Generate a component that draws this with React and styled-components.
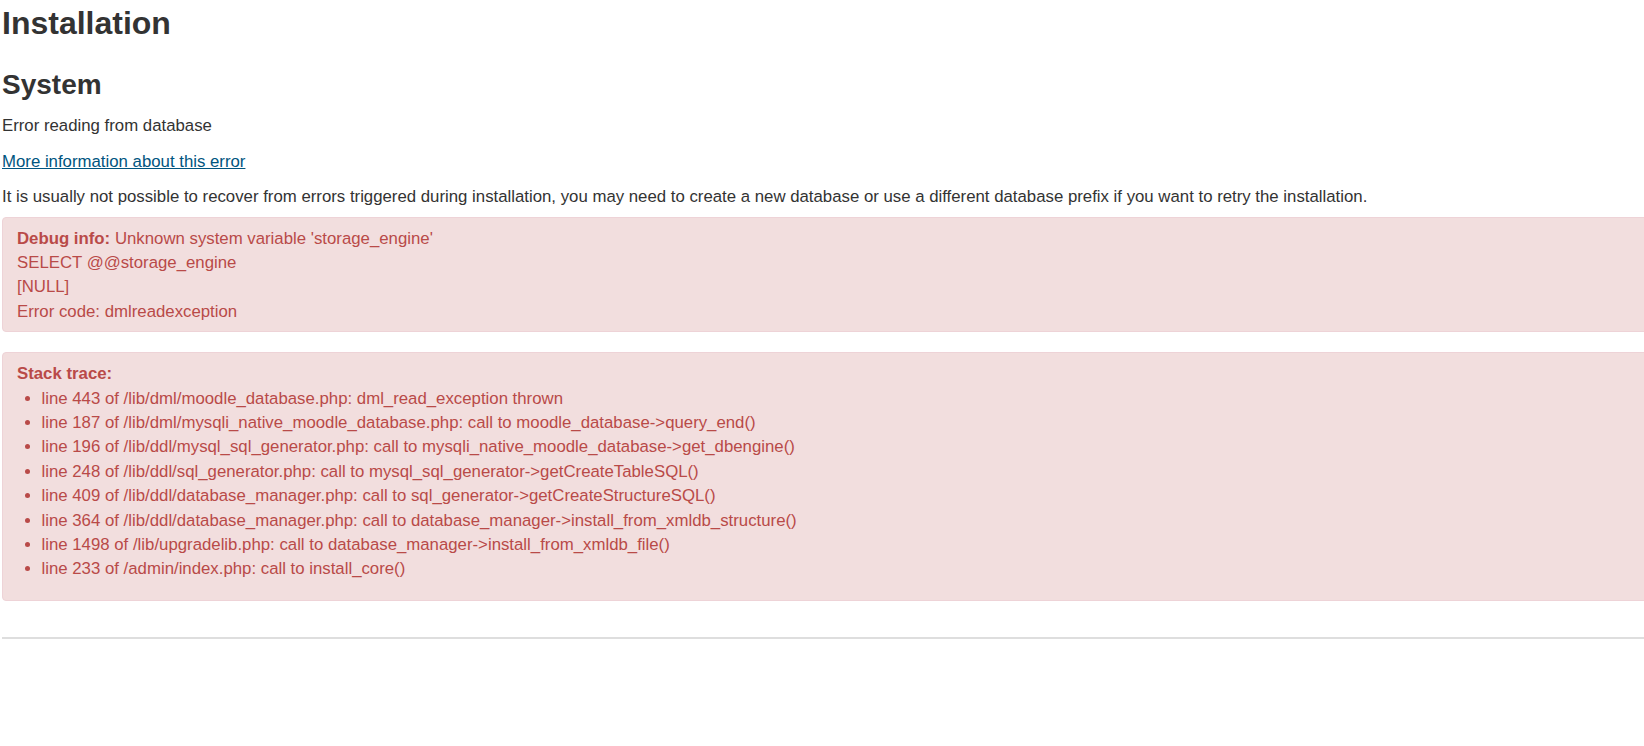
import styled, { createGlobalStyle } from "styled-components";

const GlobalStyle = createGlobalStyle`
  html, body {
    margin: 0;
    padding: 0;
    background: #fff;
    overflow: hidden;
  }
  body {
    font-family: "Liberation Sans", Arial, Helvetica, sans-serif;
    font-size: 16.8px;
    line-height: 24px;
    color: #333;
  }
`;

const Page = styled.div`
  width: 1720px;
  padding: 0 0 0 2px;
`;

const Title = styled.h1`
  margin: 4px 0 0;
  font-size: 32px;
  line-height: 38px;
  font-weight: bold;
  color: #333;
`;

const SubTitle = styled.h2`
  margin: 26px 0 0;
  font-size: 28px;
  line-height: 34px;
  font-weight: bold;
  color: #333;
`;

const Text = styled.p`
  margin: ${(p) => p.$top || 0}px 0 0;
  line-height: 24px;
`;

const Link = styled.a`
  color: #005580;
  text-decoration: underline;
`;

const Alert = styled.div`
  margin-top: ${(p) => p.$top}px;
  padding: 9px 14px 7px;
  background: #f2dede;
  border: 1px solid #eed3d7;
  border-radius: 4px;
  color: #b94a48;
  line-height: 24.4px;
`;

const Line = styled.div``;

const Label = styled.strong`
  font-weight: bold;
`;

const TraceList = styled.ul`
  margin: 0 0 11px;
  padding-left: 24.5px;
  list-style: disc;

  li {
    line-height: 24.4px;
  }
`;

const Rule = styled.hr`
  margin: 36px 0 0;
  height: 0;
  border: 0;
  border-top: 2px solid #dedede;
`;

const trace = [
  "line 443 of /lib/dml/moodle_database.php: dml_read_exception thrown",
  "line 187 of /lib/dml/mysqli_native_moodle_database.php: call to moodle_database->query_end()",
  "line 196 of /lib/ddl/mysql_sql_generator.php: call to mysqli_native_moodle_database->get_dbengine()",
  "line 248 of /lib/ddl/sql_generator.php: call to mysql_sql_generator->getCreateTableSQL()",
  "line 409 of /lib/ddl/database_manager.php: call to sql_generator->getCreateStructureSQL()",
  "line 364 of /lib/ddl/database_manager.php: call to database_manager->install_from_xmldb_structure()",
  "line 1498 of /lib/upgradelib.php: call to database_manager->install_from_xmldb_file()",
  "line 233 of /admin/index.php: call to install_core()",
];

export default function App() {
  return (
    <Page>
      <GlobalStyle />
      <Title>Installation</Title>
      <SubTitle>System</SubTitle>
      <Text $top={12}>Error reading from database</Text>
      <Text $top={11.5}>
        <Link href="#">More information about this error</Link>
      </Text>
      <Text $top={11}>
        It is usually not possible to recover from errors triggered during
        installation, you may need to create a new database or use a different
        database prefix if you want to retry the installation.
      </Text>
      <Alert $top={8}>
        <Line>
          <Label>Debug info:</Label> Unknown system variable 'storage_engine'
        </Line>
        <Line>SELECT @@storage_engine</Line>
        <Line>[NULL]</Line>
        <Line>Error code: dmlreadexception</Line>
      </Alert>
      <Alert $top={20}>
        <Line>
          <Label>Stack trace:</Label>
        </Line>
        <TraceList>
          {trace.map((t) => (
            <li key={t}>{t}</li>
          ))}
        </TraceList>
      </Alert>
      <Rule />
    </Page>
  );
}
